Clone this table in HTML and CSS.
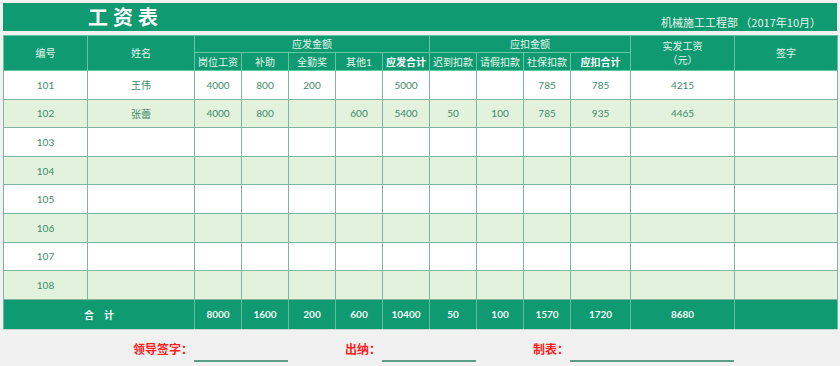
FILE: index.html
```html
<!DOCTYPE html>
<html lang="zh-CN">
<head>
<meta charset="utf-8">
<title>工资表</title>
<link rel="stylesheet" href="styles.css">
</head>
<body>
<div class="page">
  <div class="titlebar">
    <div class="title">工资表</div>
    <div class="subtitle">机械施工工程部 （2017年10月）</div>
  </div>
  <table class="sheet">
    <colgroup>
      <col class="c-no"><col class="c-name">
      <col class="c-n"><col class="c-n"><col class="c-n"><col class="c-n"><col class="c-n">
      <col class="c-n"><col class="c-n"><col class="c-n"><col class="c-w">
      <col class="c-pay"><col class="c-sign">
    </colgroup>
    <thead>
      <tr class="h1">
        <th rowspan="2">编号</th>
        <th rowspan="2">姓名</th>
        <th colspan="5">应发金额</th>
        <th colspan="4">应扣金额</th>
        <th rowspan="2" class="two">实发工资<br>（元）</th>
        <th rowspan="2">签字</th>
      </tr>
      <tr class="h2">
        <th>岗位工资</th><th>补助</th><th>全勤奖</th><th>其他1</th><th class="b">应发合计</th>
        <th>迟到扣款</th><th>请假扣款</th><th>社保扣款</th><th class="b">应扣合计</th>
      </tr>
    </thead>
    <tbody>
      <tr><td>101</td><td>王伟</td><td>4000</td><td>800</td><td>200</td><td></td><td>5000</td><td></td><td></td><td>785</td><td>785</td><td>4215</td><td></td></tr>
      <tr><td>102</td><td>张蕾</td><td>4000</td><td>800</td><td></td><td>600</td><td>5400</td><td>50</td><td>100</td><td>785</td><td>935</td><td>4465</td><td></td></tr>
      <tr><td>103</td><td></td><td></td><td></td><td></td><td></td><td></td><td></td><td></td><td></td><td></td><td></td><td></td></tr>
      <tr><td>104</td><td></td><td></td><td></td><td></td><td></td><td></td><td></td><td></td><td></td><td></td><td></td><td></td></tr>
      <tr><td>105</td><td></td><td></td><td></td><td></td><td></td><td></td><td></td><td></td><td></td><td></td><td></td><td></td></tr>
      <tr><td>106</td><td></td><td></td><td></td><td></td><td></td><td></td><td></td><td></td><td></td><td></td><td></td><td></td></tr>
      <tr><td>107</td><td></td><td></td><td></td><td></td><td></td><td></td><td></td><td></td><td></td><td></td><td></td><td></td></tr>
      <tr><td>108</td><td></td><td></td><td></td><td></td><td></td><td></td><td></td><td></td><td></td><td></td><td></td><td></td></tr>
    </tbody>
    <tfoot>
      <tr><td colspan="2">合　计</td><td>8000</td><td>1600</td><td>200</td><td>600</td><td>10400</td><td>50</td><td>100</td><td>1570</td><td>1720</td><td>8680</td><td></td></tr>
    </tfoot>
  </table>
  <div class="signs">
    <div class="label l1">领导签字：</div>
    <div class="line s1"></div>
    <div class="label l2">出纳：</div>
    <div class="line s2"></div>
    <div class="label l3">制表：</div>
    <div class="line s3"></div>
  </div>
</div>
</body>
</html>
```

FILE: styles.css
```css
html, body {
  margin: 0;
  padding: 0;
  background: #f1f1f1;
}

.page {
  padding: 3px 0 0 3px;
  width: 834px;
  font-family: Lato, "Noto Sans CJK SC", sans-serif;
}

.titlebar {
  height: 28px;
  background: #0f9a72;
  display: flex;
  justify-content: space-between;
  box-sizing: border-box;
}

.title {
  padding-left: 85px;
  color: #ffffff;
  font-family: "Noto Sans CJK SC", sans-serif;
  font-weight: 700;
  font-size: 20px;
  letter-spacing: 5px;
  line-height: 27px;
}

.subtitle {
  align-self: flex-end;
  padding: 0 16px 1px 0;
  color: #e4f5ee;
  font-family: "Noto Sans CJK SC", sans-serif;
  font-size: 11px;
  line-height: 16px;
}

.sheet {
  margin-top: 4px;
  width: 834px;
  table-layout: fixed;
  border-collapse: collapse;
  font-size: 10px;
}

.c-no { width: 84px; }
.c-name { width: 107px; }
.c-n { width: 47px; }
.c-w { width: 60px; }
.c-pay { width: 104px; }
.c-sign { width: 103px; }

.sheet th,
.sheet td {
  padding: 0;
  text-align: center;
  vertical-align: middle;
  overflow: hidden;
  white-space: nowrap;
}

.sheet thead th {
  background: #0f9a72;
  color: #e2f4ec;
  font-weight: 400;
  font-size: 10px;
  border: 1px solid #63c7a3;
  line-height: 14px;
}

.sheet thead th.b {
  font-weight: 700;
  color: #ffffff;
}

.sheet thead .h1 { height: 17px; }
.sheet thead .h2 { height: 18px; }

.sheet tbody td {
  border: 1px solid #80b5a1;
  color: #3f8b6b;
  height: 27.6px;
}

.sheet tbody tr:nth-child(odd) td { background: #ffffff; }
.sheet tbody tr:nth-child(even) td { background: #e2f2dc; }

.sheet tfoot td {
  background: #0f9a72;
  color: #f2fbf7;
  font-weight: 700;
  height: 29px;
  border: 1px solid #5cc29e;
  border-bottom: 1px solid #c3d8cf;
}

.signs {
  display: grid;
  grid-template-columns: 84px 107px 47px 47px 47px 47px 47px 47px 47px 47px 60px 104px 103px;
  height: 32px;
  align-items: end;
}

.label {
  color: #ff1e1e;
  font-family: "Noto Sans CJK SC", sans-serif;
  font-weight: 700;
  font-size: 12px;
  line-height: 14px;
  text-align: right;
  padding: 0 1px 6px 0;
}

.line {
  height: 0;
  border-bottom: 2px solid #5d9c88;
}

.l1 { grid-column: 1 / 3; }
.s1 { grid-column: 3 / 5; }
.l2 { grid-column: 5 / 7; }
.s2 { grid-column: 7 / 9; }
.l3 { grid-column: 9 / 11; }
.s3 { grid-column: 11 / 13; }
```
